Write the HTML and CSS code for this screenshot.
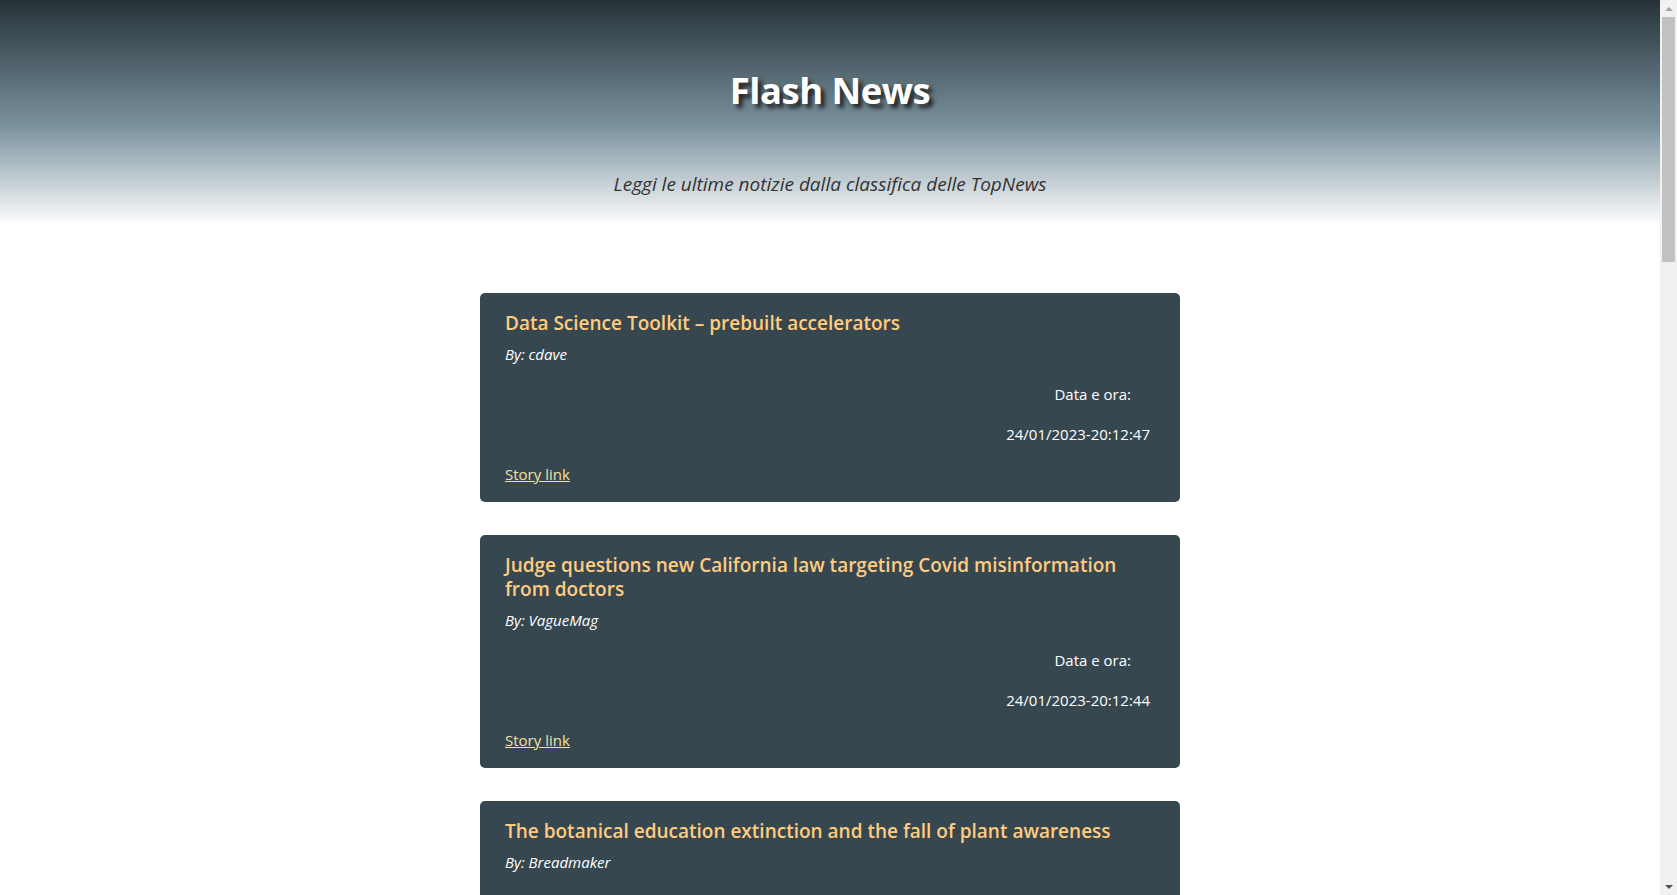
FILE: index.html
```html
<!DOCTYPE html>
<html lang="it">
<head>
<meta charset="utf-8">
<title>Flash News</title>
<link rel="stylesheet" href="styles.css">
</head>
<body>
<header class="hero">
  <h1 class="hero-title">Flash News</h1>
  <p class="hero-sub">Leggi le ultime notizie dalla classifica delle TopNews</p>
</header>
<main class="feed">
  <article class="card">
    <h3 class="card-title">Data Science Toolkit – prebuilt accelerators</h3>
    <p class="card-by">By: cdave</p>
    <div class="card-date">
      <p class="date-label">Data e ora:</p>
      <p class="date-value">24/01/2023-20:12:47</p>
    </div>
    <a class="card-link" href="#">Story link</a>
  </article>
  <article class="card">
    <h3 class="card-title">Judge questions new California law targeting Covid misinformation from doctors</h3>
    <p class="card-by">By: VagueMag</p>
    <div class="card-date">
      <p class="date-label">Data e ora:</p>
      <p class="date-value">24/01/2023-20:12:44</p>
    </div>
    <a class="card-link" href="#">Story link</a>
  </article>
  <article class="card">
    <h3 class="card-title">The botanical education extinction and the fall of plant awareness</h3>
    <p class="card-by">By: Breadmaker</p>
    <div class="card-date">
      <p class="date-label">Data e ora:</p>
      <p class="date-value">24/01/2023-20:12:40</p>
    </div>
    <a class="card-link" href="#">Story link</a>
  </article>
</main>
<div class="scrollbar" aria-hidden="true">
  <span class="sb-arrow sb-up"></span>
  <span class="sb-thumb"></span>
  <span class="sb-arrow sb-down"></span>
</div>
</body>
</html>
```

FILE: styles.css
```css
body {
  margin: 0 17px 0 0;
  font-family: "Open Sans", "Noto Sans", sans-serif;
  font-size: 15px;
  color: #fff;
  background: #fff;
}
.hero {
  height: 226px;
  background: linear-gradient(to bottom, #263238 0%, #78909c 55%, #ffffff 100%);
  display: flex;
  flex-direction: column;
  align-items: center;
}
.hero-title {
  margin: 62px 0 0;
  font-size: 36.5px;
  line-height: 56px;
  font-weight: 700;
  color: #fff;
  text-shadow: 4px 4px 4px #222;
  letter-spacing: -0.5px;
}
.hero-sub {
  margin: 54px 0 0;
  font-size: 19px;
  line-height: 24px;
  font-style: italic;
  color: #333;
}
.feed {
  width: 700px;
  margin: 67px auto 40px;
  display: flex;
  flex-direction: column;
  gap: 33px;
}
.card {
  background: #37474f;
  border-radius: 5px;
  padding: 18px 25px 16px;
  display: flex;
  flex-direction: column;
}
.card-title {
  margin: 0;
  font-size: 19px;
  line-height: 24px;
  font-weight: 600;
  color: #ffcc80;
}
.card-by {
  margin: 7px 0 0;
  font-style: italic;
  line-height: 24px;
}
.card-date {
  display: flex;
  flex-direction: column;
  align-items: flex-end;
  margin-top: 16px;
  padding-right: 5px;
}
.card-date p {
  margin: 0;
  line-height: 24px;
}
.date-label {
  padding-right: 19px;
}
.date-value {
  margin-top: 16px !important;
}
.card-link {
  align-self: flex-start;
  margin-top: 16px;
  line-height: 24px;
  color: #f3e2a0;
}
.scrollbar {
  position: fixed;
  top: 0;
  right: 0;
  width: 17px;
  height: 100vh;
  background: #f1f1f1;
  display: flex;
  flex-direction: column;
  align-items: center;
}
.sb-arrow {
  flex: 0 0 17px;
  width: 17px;
  display: flex;
  align-items: center;
  justify-content: center;
}
.sb-up::before,
.sb-down::before {
  content: "";
  width: 0;
  height: 0;
  border-left: 4px solid transparent;
  border-right: 4px solid transparent;
}
.sb-up::before {
  border-bottom: 4px solid #a3a3a3;
}
.sb-down::before {
  border-top: 4px solid #505050;
}
.sb-thumb {
  width: 13px;
  height: 245px;
  background: #c1c1c1;
}
.sb-down {
  margin-top: auto;
}
```
